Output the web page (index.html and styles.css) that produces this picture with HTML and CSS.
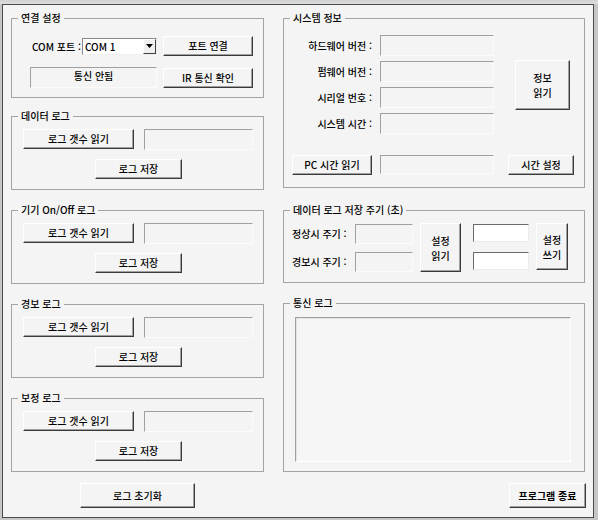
FILE: index.html
```html
<!DOCTYPE html>
<html lang="ko">
<head>
<meta charset="utf-8">
<title>설정</title>
<link rel="stylesheet" href="styles.css">
</head>
<body>
<div class="window">
  <div class="col col-left">
    <section class="group g-conn">
      <span class="group-title">연결 설정</span>
      <div class="conn-grid">
        <div class="com-line">
          <span class="com-lbl">COM 포트 :</span>
          <div class="combo">
            <span class="combo-val">COM 1</span>
            <span class="combo-btn"><svg width="7" height="4" viewBox="0 0 7 4"><path d="M0 0H7L3.5 4Z" fill="#000"/></svg></span>
          </div>
        </div>
        <button class="btn btn-conn">포트 연결</button>
        <div class="field status">통신 안됨</div>
        <button class="btn btn-conn">IR 통신 확인</button>
      </div>
    </section>

    <section class="group g-log">
      <span class="group-title">데이터 로그</span>
      <div class="log-row">
        <button class="btn btn-count">로그 갯수 읽기</button>
        <div class="field field-count"></div>
      </div>
      <button class="btn btn-save">로그 저장</button>
    </section>

    <section class="group g-log">
      <span class="group-title">기기 On/Off 로그</span>
      <div class="log-row">
        <button class="btn btn-count">로그 갯수 읽기</button>
        <div class="field field-count"></div>
      </div>
      <button class="btn btn-save">로그 저장</button>
    </section>

    <section class="group g-log">
      <span class="group-title">경보 로그</span>
      <div class="log-row">
        <button class="btn btn-count">로그 갯수 읽기</button>
        <div class="field field-count"></div>
      </div>
      <button class="btn btn-save">로그 저장</button>
    </section>

    <section class="group g-log">
      <span class="group-title">보정 로그</span>
      <div class="log-row">
        <button class="btn btn-count">로그 갯수 읽기</button>
        <div class="field field-count"></div>
      </div>
      <button class="btn btn-save">로그 저장</button>
    </section>

    <button class="btn btn-reset">로그 초기화</button>
  </div>

  <div class="col col-right">
    <section class="group g-sys">
      <span class="group-title">시스템 정보</span>
      <div class="sys-grid">
        <span class="lbl-r r1">하드웨어 버전 :</span>
        <div class="field sys-field r1"></div>
        <span class="lbl-r r2">펌웨어 버전 :</span>
        <div class="field sys-field r2"></div>
        <span class="lbl-r r3">시리얼 번호 :</span>
        <div class="field sys-field r3"></div>
        <span class="lbl-r r4">시스템 시간 :</span>
        <div class="field sys-field r4"></div>
        <button class="btn btn-two btn-info">정보<br>읽기</button>
        <button class="btn btn-pc r5">PC 시간 읽기</button>
        <div class="field sys-field sys-time r5"></div>
        <button class="btn btn-settime r5">시간 설정</button>
      </div>
    </section>

    <section class="group g-period">
      <span class="group-title">데이터 로그 저장 주기 (초)</span>
      <div class="period-grid">
        <span class="period-lbl p1">정상시 주기 :</span>
        <div class="field period-field p1"></div>
        <span class="period-lbl p2">경보시 주기 :</span>
        <div class="field period-field p2"></div>
        <button class="btn btn-two btn-read">설정<br>읽기</button>
        <div class="field-white p1"></div>
        <div class="field-white p2"></div>
        <button class="btn btn-two btn-write">설정<br>쓰기</button>
      </div>
    </section>

    <section class="group g-comm">
      <span class="group-title">통신 로그</span>
      <div class="log-area"></div>
    </section>

    <button class="btn btn-exit">프로그램 종료</button>
  </div>
</div>
</body>
</html>
```

FILE: styles.css
```css
* { box-sizing: border-box; }

html, body {
  margin: 0;
  padding: 0;
}

body {
  width: 598px;
  height: 520px;
  overflow: hidden;
  background: linear-gradient(#d2d2d2, #dcdcdc 4px, #c6c6c6 4px);
  font-family: "Noto Sans CJK KR", "Noto Sans", sans-serif;
  font-size: 10px;
  font-weight: 500;
  color: #000;
}

.window {
  margin: 4px 0 0 2px;
  width: 592px;
  height: 514px;
  border: 1px solid #4a4a4a;
  background: #f4f4f4;
  display: grid;
  grid-template-columns: 253px 302px;
  column-gap: 19px;
  padding: 13px 0 0 8px;
  align-items: start;
}

.col {
  display: flex;
  flex-direction: column;
}

.group {
  position: relative;
  border: 1px solid #a3a3a3;
}

.group-title {
  position: absolute;
  top: -8px;
  left: 6px;
  padding: 0 3px;
  background: #f4f4f4;
  line-height: 14px;
  white-space: nowrap;
}

.btn {
  font: inherit;
  color: #000;
  background: #f4f4f4;
  border: 1px solid;
  border-color: #ffffff #3a3a3a #3a3a3a #ffffff;
  box-shadow: inset -1px -1px 0 #a0a0a0;
  padding: 0;
  height: 20px;
  line-height: 12px;
  text-align: center;
  white-space: nowrap;
}

.btn-two {
  line-height: 15px;
}

.field {
  border: 1px solid;
  border-color: #a0a0a0 #fbfbfb #fbfbfb #a0a0a0;
  background: #f4f4f4;
}

.field-white {
  background: #fff;
  border: 1px solid;
  border-color: #6a6a6a #ececec #ececec #6a6a6a;
  height: 18px;
}

/* 연결 설정 */
.g-conn {
  height: 80px;
  padding: 17px 0 0 18px;
}

.conn-grid {
  display: grid;
  grid-template-columns: 127px 90px;
  column-gap: 6px;
  row-gap: 11px;
  align-items: center;
}

.com-line {
  display: flex;
  align-items: center;
}

.com-lbl {
  margin-left: 2px;
  white-space: nowrap;
}

.combo {
  margin-left: auto;
  display: flex;
  width: 75px;
  height: 17px;
  background: #fff;
  border: 1px solid;
  border-color: #8a8a8a #efefef #efefef #8a8a8a;
}

.combo-val {
  flex: 1;
  padding-left: 2px;
  line-height: 15px;
}

.combo-btn {
  width: 13px;
  background: #f0f0f0;
  border: 1px solid;
  border-color: #ffffff #404040 #404040 #ffffff;
  display: flex;
  align-items: center;
  justify-content: center;
}

.status {
  height: 21px;
  text-align: center;
  padding-top: 1px;
  line-height: 14px;
}

/* 로그 그룹 */
.g-log {
  height: 74px;
  padding: 12px 0 0 11px;
}

.col-left .g-log { margin-top: 20px; }
.col-left .g-conn + .g-log { margin-top: 18px; }

.log-row {
  display: flex;
  gap: 10px;
}

.btn-count { width: 111px; }

.field-count {
  width: 109px;
  height: 21px;
}

.btn-save {
  width: 87px;
  margin: 9px 0 0 72px;
}

.btn-reset {
  width: 115px;
  height: 25px;
  margin: 11px 0 0 69px;
}

/* 시스템 정보 */
.g-sys {
  height: 170px;
  padding: 16px 0 0 8px;
}

.sys-grid {
  display: grid;
  grid-template-columns: 80px 114px 80px;
  grid-template-rows: 21px 21px 21px 21px 20px;
  column-gap: 8px;
  row-gap: 5px;
}

.r1 { grid-row: 1; }
.r2 { grid-row: 2; }
.r3 { grid-row: 3; }
.r4 { grid-row: 4; }
.r5 { grid-row: 5; margin-top: 16px; }

.lbl-r {
  grid-column: 1;
  text-align: right;
  align-self: center;
  white-space: nowrap;
}

.sys-field { grid-column: 2; }

.sys-time { height: 19px; }

.btn-info {
  grid-column: 3;
  grid-row: 2 / span 2;
  align-self: center;
  justify-self: start;
  width: 55px;
  height: 50px;
  margin-left: 13px;
}

.btn-pc {
  grid-column: 1;
  width: 80px;
}

.btn-settime {
  grid-column: 3;
  justify-self: start;
  width: 66px;
  margin-left: 6px;
}

/* 데이터 로그 저장 주기 */
.g-period {
  height: 73px;
  margin-top: 22px;
  padding: 13px 0 0 8px;
}

.period-grid {
  display: grid;
  grid-template-columns: 56px 58px 41px 61px 32px;
  grid-template-rows: 19px 19px;
  column-gap: 7px;
  row-gap: 9px;
}

.p1 { grid-row: 1; }
.p2 { grid-row: 2; }

.period-lbl {
  grid-column: 1;
  align-self: center;
  white-space: nowrap;
}

.period-field {
  grid-column: 2;
  height: 20px;
}

.btn-read {
  grid-column: 3;
  grid-row: 1 / span 2;
  align-self: start;
  height: 49px;
  margin-top: -1px;
}

.field-white {
  grid-column: 4;
  justify-self: end;
  width: 56px;
}

.btn-write {
  grid-column: 5;
  grid-row: 1 / span 2;
  align-self: start;
  height: 47px;
  margin-top: -1px;
}

/* 통신 로그 */
.g-comm {
  height: 169px;
  margin-top: 20px;
  padding: 13px 0 0 11px;
}

.log-area {
  width: 276px;
  height: 145px;
  background: #f6f6f6;
  border: 1px solid;
  border-color: #a0a0a0 #ffffff #ffffff #a0a0a0;
  box-shadow: inset 1px 1px 0 #e2e2e2;
}

.btn-exit {
  align-self: flex-end;
  width: 77px;
  height: 25px;
  margin: 11px -1px 0 0;
  font-weight: bold;
}
```
